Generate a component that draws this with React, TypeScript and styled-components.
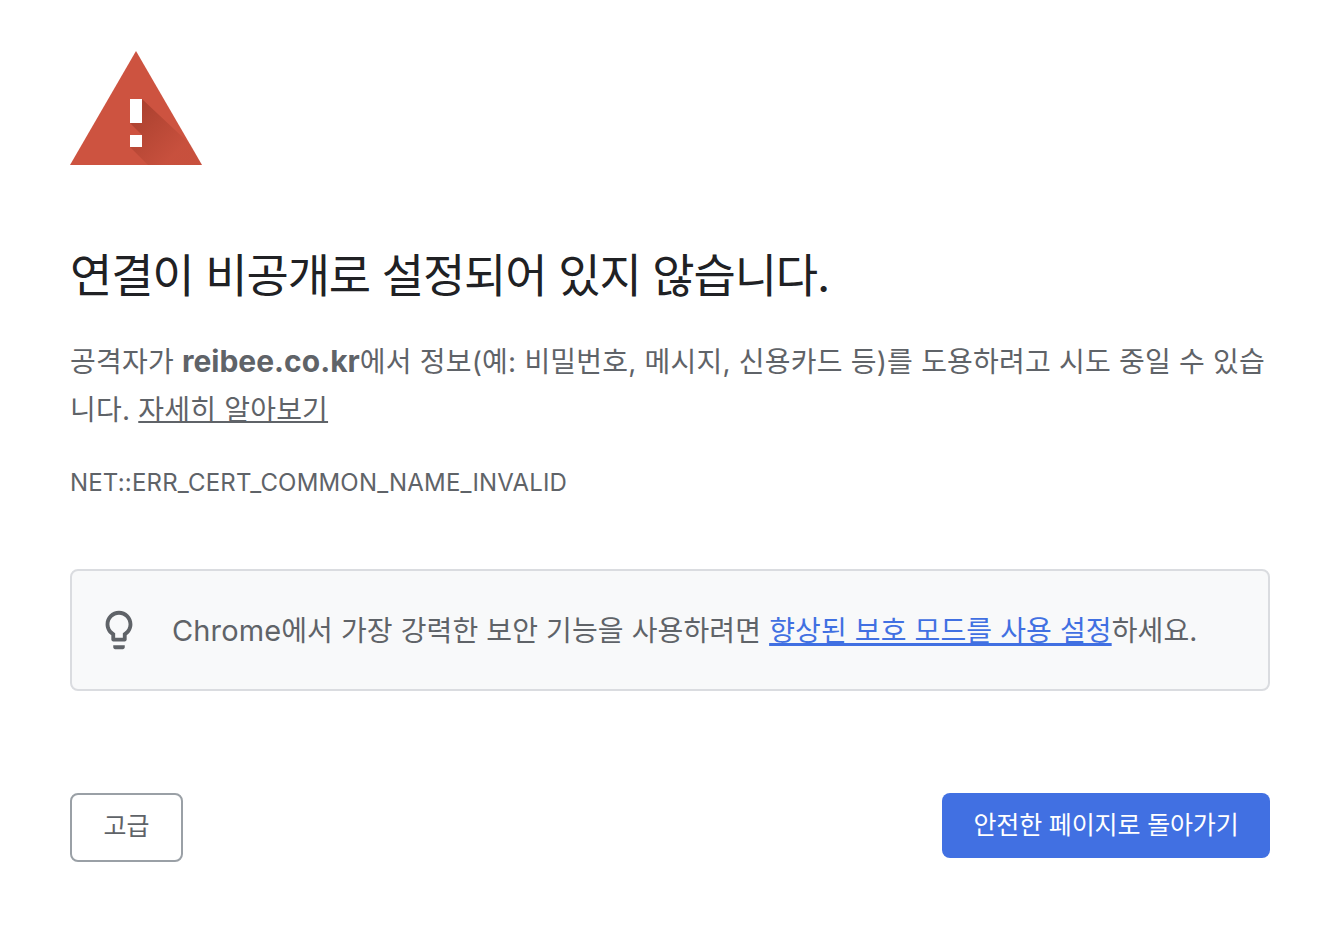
import styled, { createGlobalStyle } from "styled-components";

const GlobalStyle = createGlobalStyle`
  html, body {
    margin: 0;
    padding: 0;
    background: #fff;
  }
  body {
    font-family: Inter, "Noto Sans CJK KR", sans-serif;
  }
`;

const Page = styled.main`
  box-sizing: border-box;
  width: 1338px;
  height: 928px;
  padding: 51px 68px 0 70px;
  overflow: hidden;
`;

const WarningIcon = styled.svg`
  display: block;
  width: 132px;
  height: 114px;
`;

const Heading = styled.h1`
  margin: 74px 0 0;
  font-size: 46px;
  line-height: 72px;
  font-weight: 400;
  color: #202124;
  letter-spacing: -1.15px;
`;

const Description = styled.p`
  margin: 26px 0 0;
  font-size: 28px;
  line-height: 48px;
  letter-spacing: 0.2px;
  color: #5f6368;
`;

const Domain = styled.strong`
  font-size: 30px;
  font-weight: 700;
  letter-spacing: 0;
`;

const LearnMore = styled.a`
  color: #5f6368;
  text-decoration: underline;
  text-decoration-thickness: 2px;
`;

const ErrorCode = styled.div`
  margin-top: 31px;
  font-size: 24px;
  line-height: 36px;
  letter-spacing: 0.18px;
  color: #5f6368;
`;

const Notice = styled.section`
  box-sizing: border-box;
  display: flex;
  align-items: center;
  gap: 30px;
  height: 122px;
  margin-top: 68px;
  padding: 0 24px;
  background: #f8f9fa;
  border: 2px solid #dadce0;
  border-radius: 8px;
  font-size: 28px;
  color: #5f6368;
`;

const BulbIcon = styled.svg`
  flex: none;
  width: 46px;
  height: 46px;
  fill: #5f6368;
`;

const NoticeText = styled.span`
  padding-bottom: 2px;
  letter-spacing: 0.12px;
`;

const Latin = styled.span`
  font-size: 29px;
`;

const NoticeLink = styled.a`
  color: #4170e2;
  text-decoration: underline;
  text-decoration-thickness: 3px;
`;

const Actions = styled.div`
  display: flex;
  justify-content: space-between;
  align-items: flex-start;
  margin-top: 102px;
`;

const AdvancedButton = styled.button`
  box-sizing: border-box;
  width: 113px;
  height: 69px;
  padding: 0 0 7px;
  background: #fff;
  border: 2px solid #9aa0a6;
  border-radius: 8px;
  font: inherit;
  font-size: 25px;
  color: #5f6368;
`;

const BackButton = styled.button`
  box-sizing: border-box;
  width: 328px;
  height: 65px;
  padding: 0 0 6px;
  background: #4170e2;
  border: 0;
  border-radius: 8px;
  font: inherit;
  font-size: 25px;
  letter-spacing: -0.15px;
  color: #fff;
`;

export default function App() {
  return (
    <Page>
      <GlobalStyle />
      <WarningIcon viewBox="0 0 132 114">
        <defs>
          <linearGradient id="shade" gradientUnits="userSpaceOnUse" x1="62" y1="62" x2="104" y2="104">
            <stop offset="0" stopColor="#8a2f1f" stopOpacity="0.5" />
            <stop offset="1" stopColor="#8a2f1f" stopOpacity="0.08" />
          </linearGradient>
        </defs>
        <path d="M66 0 132 114H0Z" fill="#cd5340" />
        <path d="M72 48 121 94 132 114H78L60 96H72V84L60 72H72Z" fill="url(#shade)" />
        <path d="M60 48h12v24H60zM60 84h12v12H60z" fill="#fff" />
      </WarningIcon>
      <Heading>연결이 비공개로 설정되어 있지 않습니다.</Heading>
      <Description>
        공격자가 <Domain>reibee.co.kr</Domain>에서 정보(예: 비밀번호, 메시지, 신용카드 등)를 도용하려고 시도 중일 수 있습니다.{" "}
        <LearnMore>자세히 알아보기</LearnMore>
      </Description>
      <ErrorCode>NET::ERR_CERT_COMMON_NAME_INVALID</ErrorCode>
      <Notice>
        <BulbIcon viewBox="0 0 24 24">
          <path d="M9 21c0 .55.45 1 1 1h4c.55 0 1-.45 1-1v-1H9v1zm3-19C8.140 2 5 5.140 5 9c0 2.380 1.190 4.470 3 5.740V17c0 .55.45 1 1 1h6c.55 0 1-.45 1-1v-2.260c1.810-1.270 3-3.360 3-5.740 0-3.860-3.140-7-7-7zm2.850 11.100l-.85.6V16h-4v-2.300l-.85-.6C7.800 12.160 7 10.630 7 9c0-2.760 2.240-5 5-5s5 2.240 5 5c0 1.630-.8 3.160-2.150 4.100z" />
        </BulbIcon>
        <NoticeText>
          <Latin>Chrome</Latin>에서 가장 강력한 보안 기능을 사용하려면 <NoticeLink>향상된 보호 모드를 사용 설정</NoticeLink>하세요.
        </NoticeText>
      </Notice>
      <Actions>
        <AdvancedButton>고급</AdvancedButton>
        <BackButton>안전한 페이지로 돌아가기</BackButton>
      </Actions>
    </Page>
  );
}
